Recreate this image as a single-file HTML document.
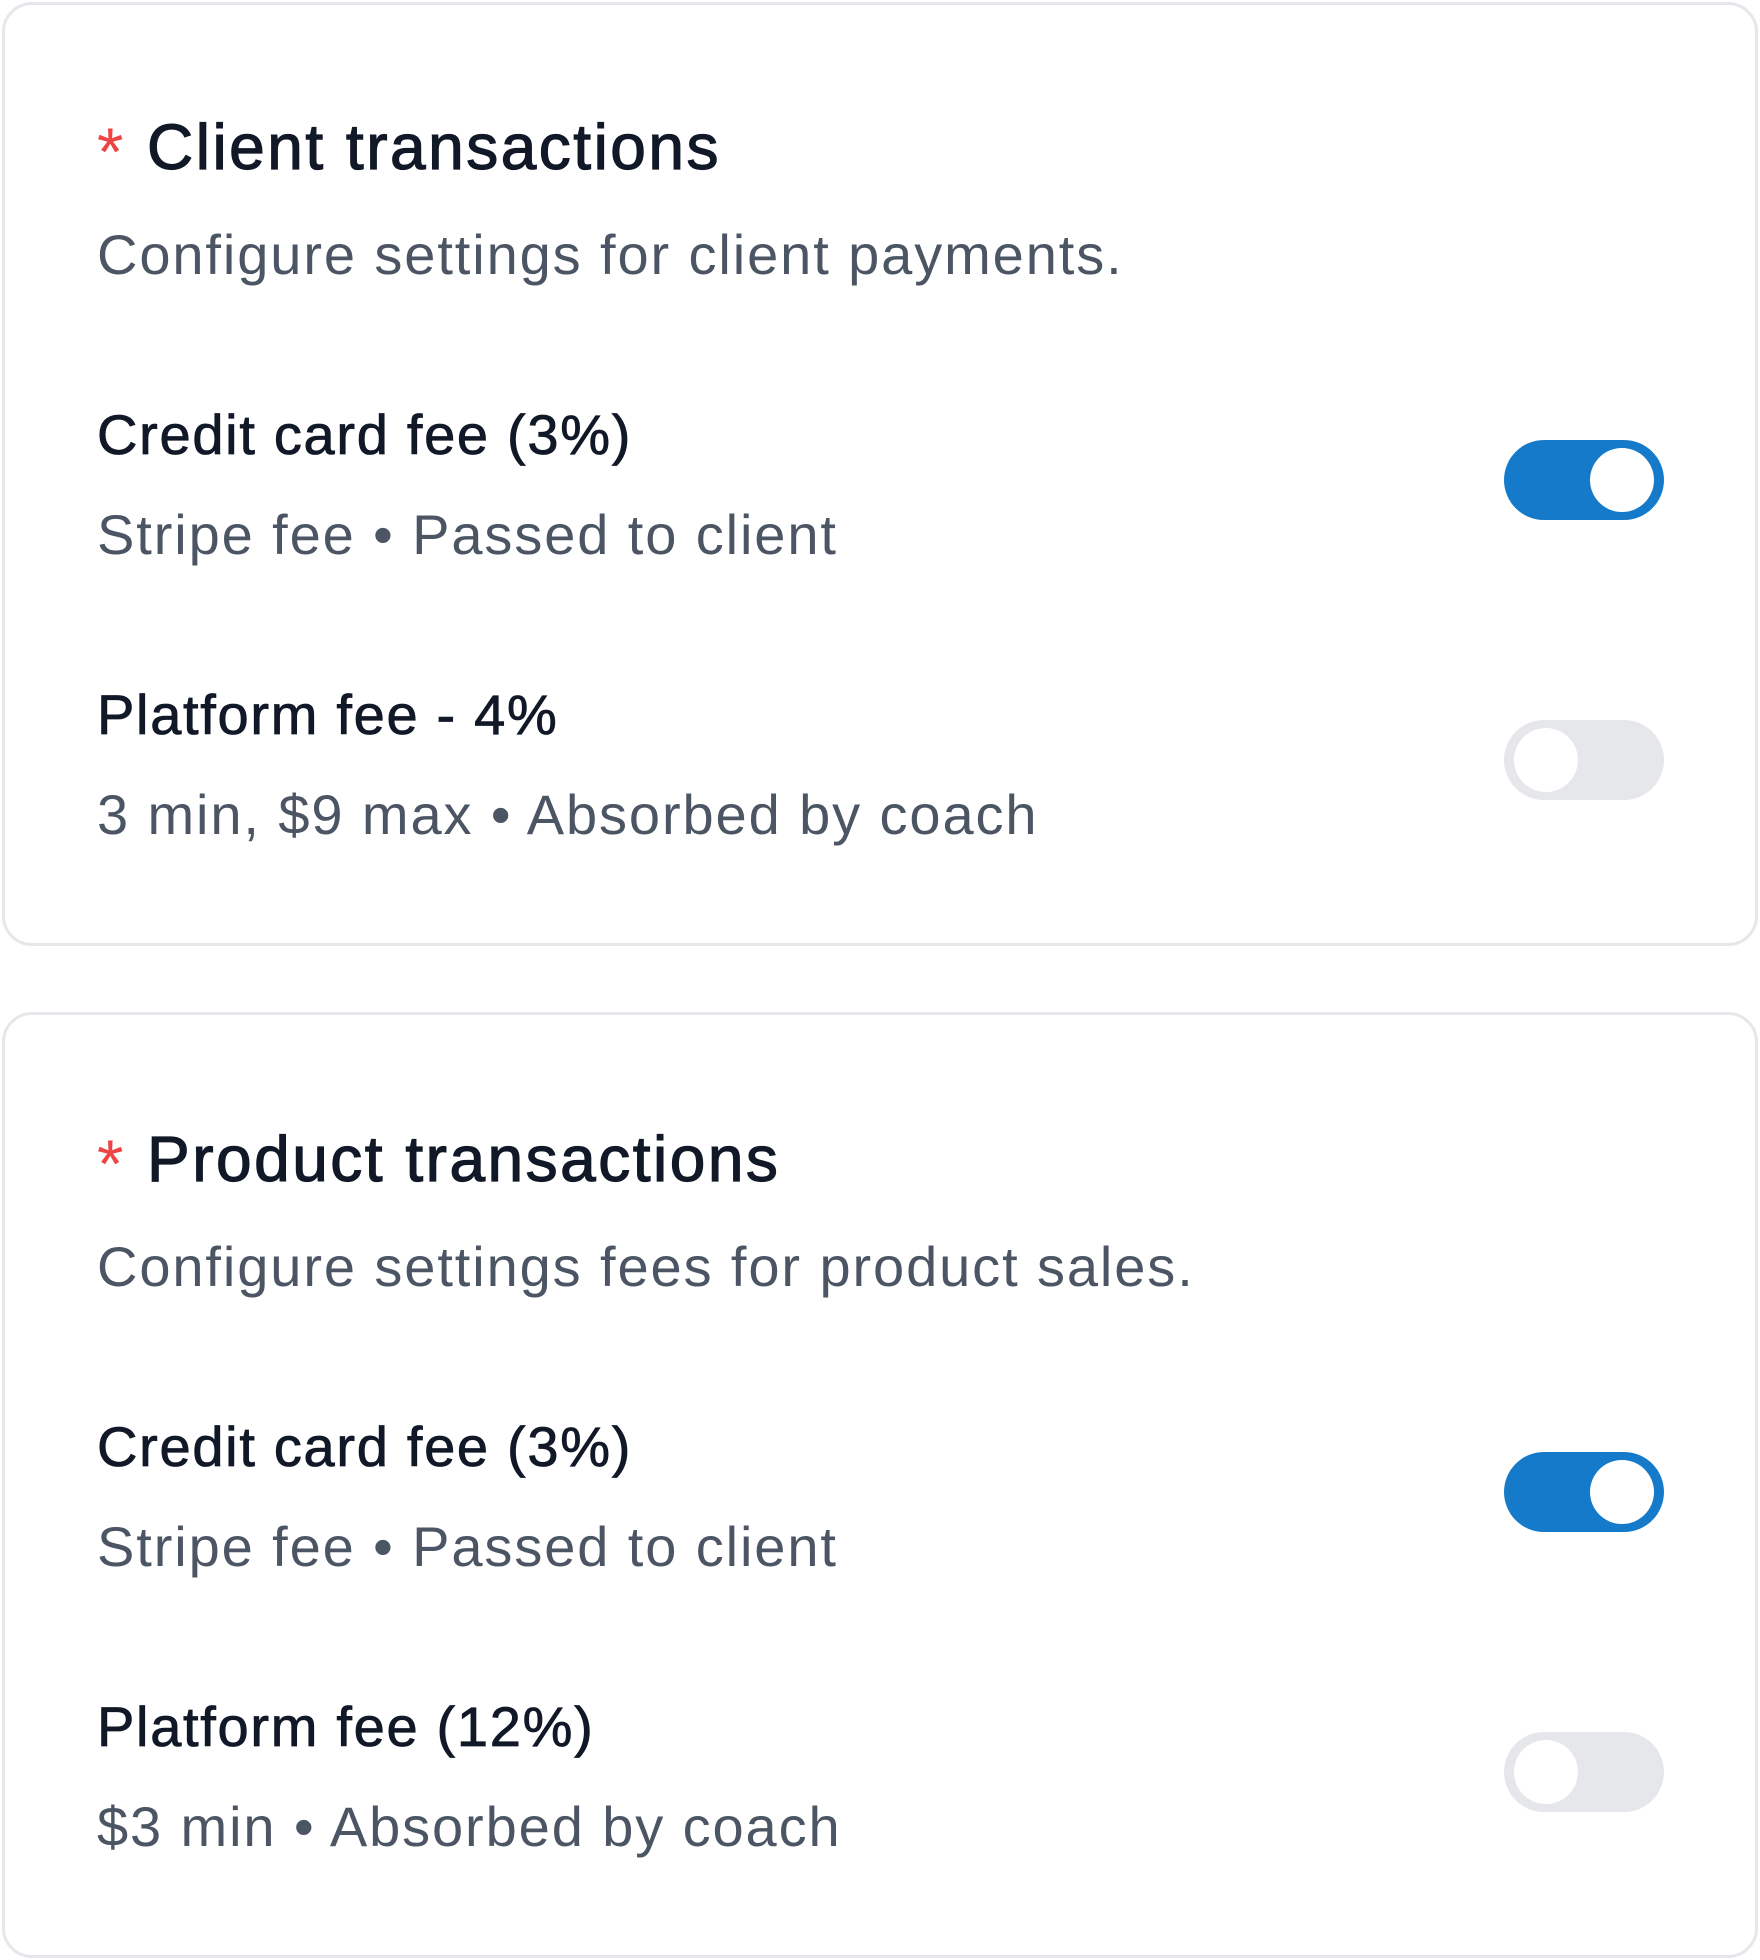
<!DOCTYPE html>
<html><head><meta charset="utf-8"><style>
html,body{margin:0;padding:0;background:#fff;}
body{width:1760px;height:1960px;position:relative;overflow:hidden;font-family:"Liberation Sans",sans-serif;}
.card{position:absolute;left:2px;width:1756px;border:3px solid #e5e7eb;border-radius:30px;background:#fff;box-sizing:border-box;}
.t{position:absolute;white-space:pre;line-height:1;}
.title{font-size:64px;color:#111827;-webkit-text-stroke:1.2px #111827;letter-spacing:2.5px;}
.ast{font-size:68px;color:#ef4444;}
.sub{font-size:56px;color:#4b5563;letter-spacing:1.9px;}
.lab{font-size:56px;color:#111827;-webkit-text-stroke:0.8px #111827;letter-spacing:1.7px;}
.desc{font-size:56px;color:#4b5563;letter-spacing:1.9px;}
.tog{position:absolute;left:1504px;width:160px;height:80px;border-radius:40px;}
.tog i{position:absolute;top:8px;width:64px;height:64px;border-radius:50%;background:#fff;}
.on{background:#147ac9;} .on i{left:86px;}
.off{background:#e5e7eb;} .off i{left:10px;}
</style></head><body>
<div class="card" style="top:2px;height:944px;"></div>
<div class="card" style="top:1012px;height:946px;"></div>

<div class="t ast" style="left:97px;top:118px;">*</div>
<div class="t title" style="left:147px;top:115px;">Client transactions</div>
<div class="t sub" style="left:97px;top:227px;">Configure settings for client payments.</div>
<div class="t lab" style="left:97px;top:407px;">Credit card fee (3%)</div>
<div class="t desc" style="left:97px;top:507px;">Stripe fee • Passed to client</div>
<div class="tog on" style="top:440px;"><i></i></div>
<div class="t lab" style="left:97px;top:687px;">Platform fee - 4%</div>
<div class="t desc" style="left:97px;top:787px;">3 min, $9 max • Absorbed by coach</div>
<div class="tog off" style="top:720px;"><i></i></div>

<div class="t ast" style="left:97px;top:1130px;">*</div>
<div class="t title" style="left:147px;top:1127px;">Product transactions</div>
<div class="t sub" style="left:97px;top:1239px;">Configure settings fees for product sales.</div>
<div class="t lab" style="left:97px;top:1419px;">Credit card fee (3%)</div>
<div class="t desc" style="left:97px;top:1519px;">Stripe fee • Passed to client</div>
<div class="tog on" style="top:1452px;"><i></i></div>
<div class="t lab" style="left:97px;top:1699px;">Platform fee (12%)</div>
<div class="t desc" style="left:97px;top:1799px;">$3 min • Absorbed by coach</div>
<div class="tog off" style="top:1732px;"><i></i></div>
</body></html>
